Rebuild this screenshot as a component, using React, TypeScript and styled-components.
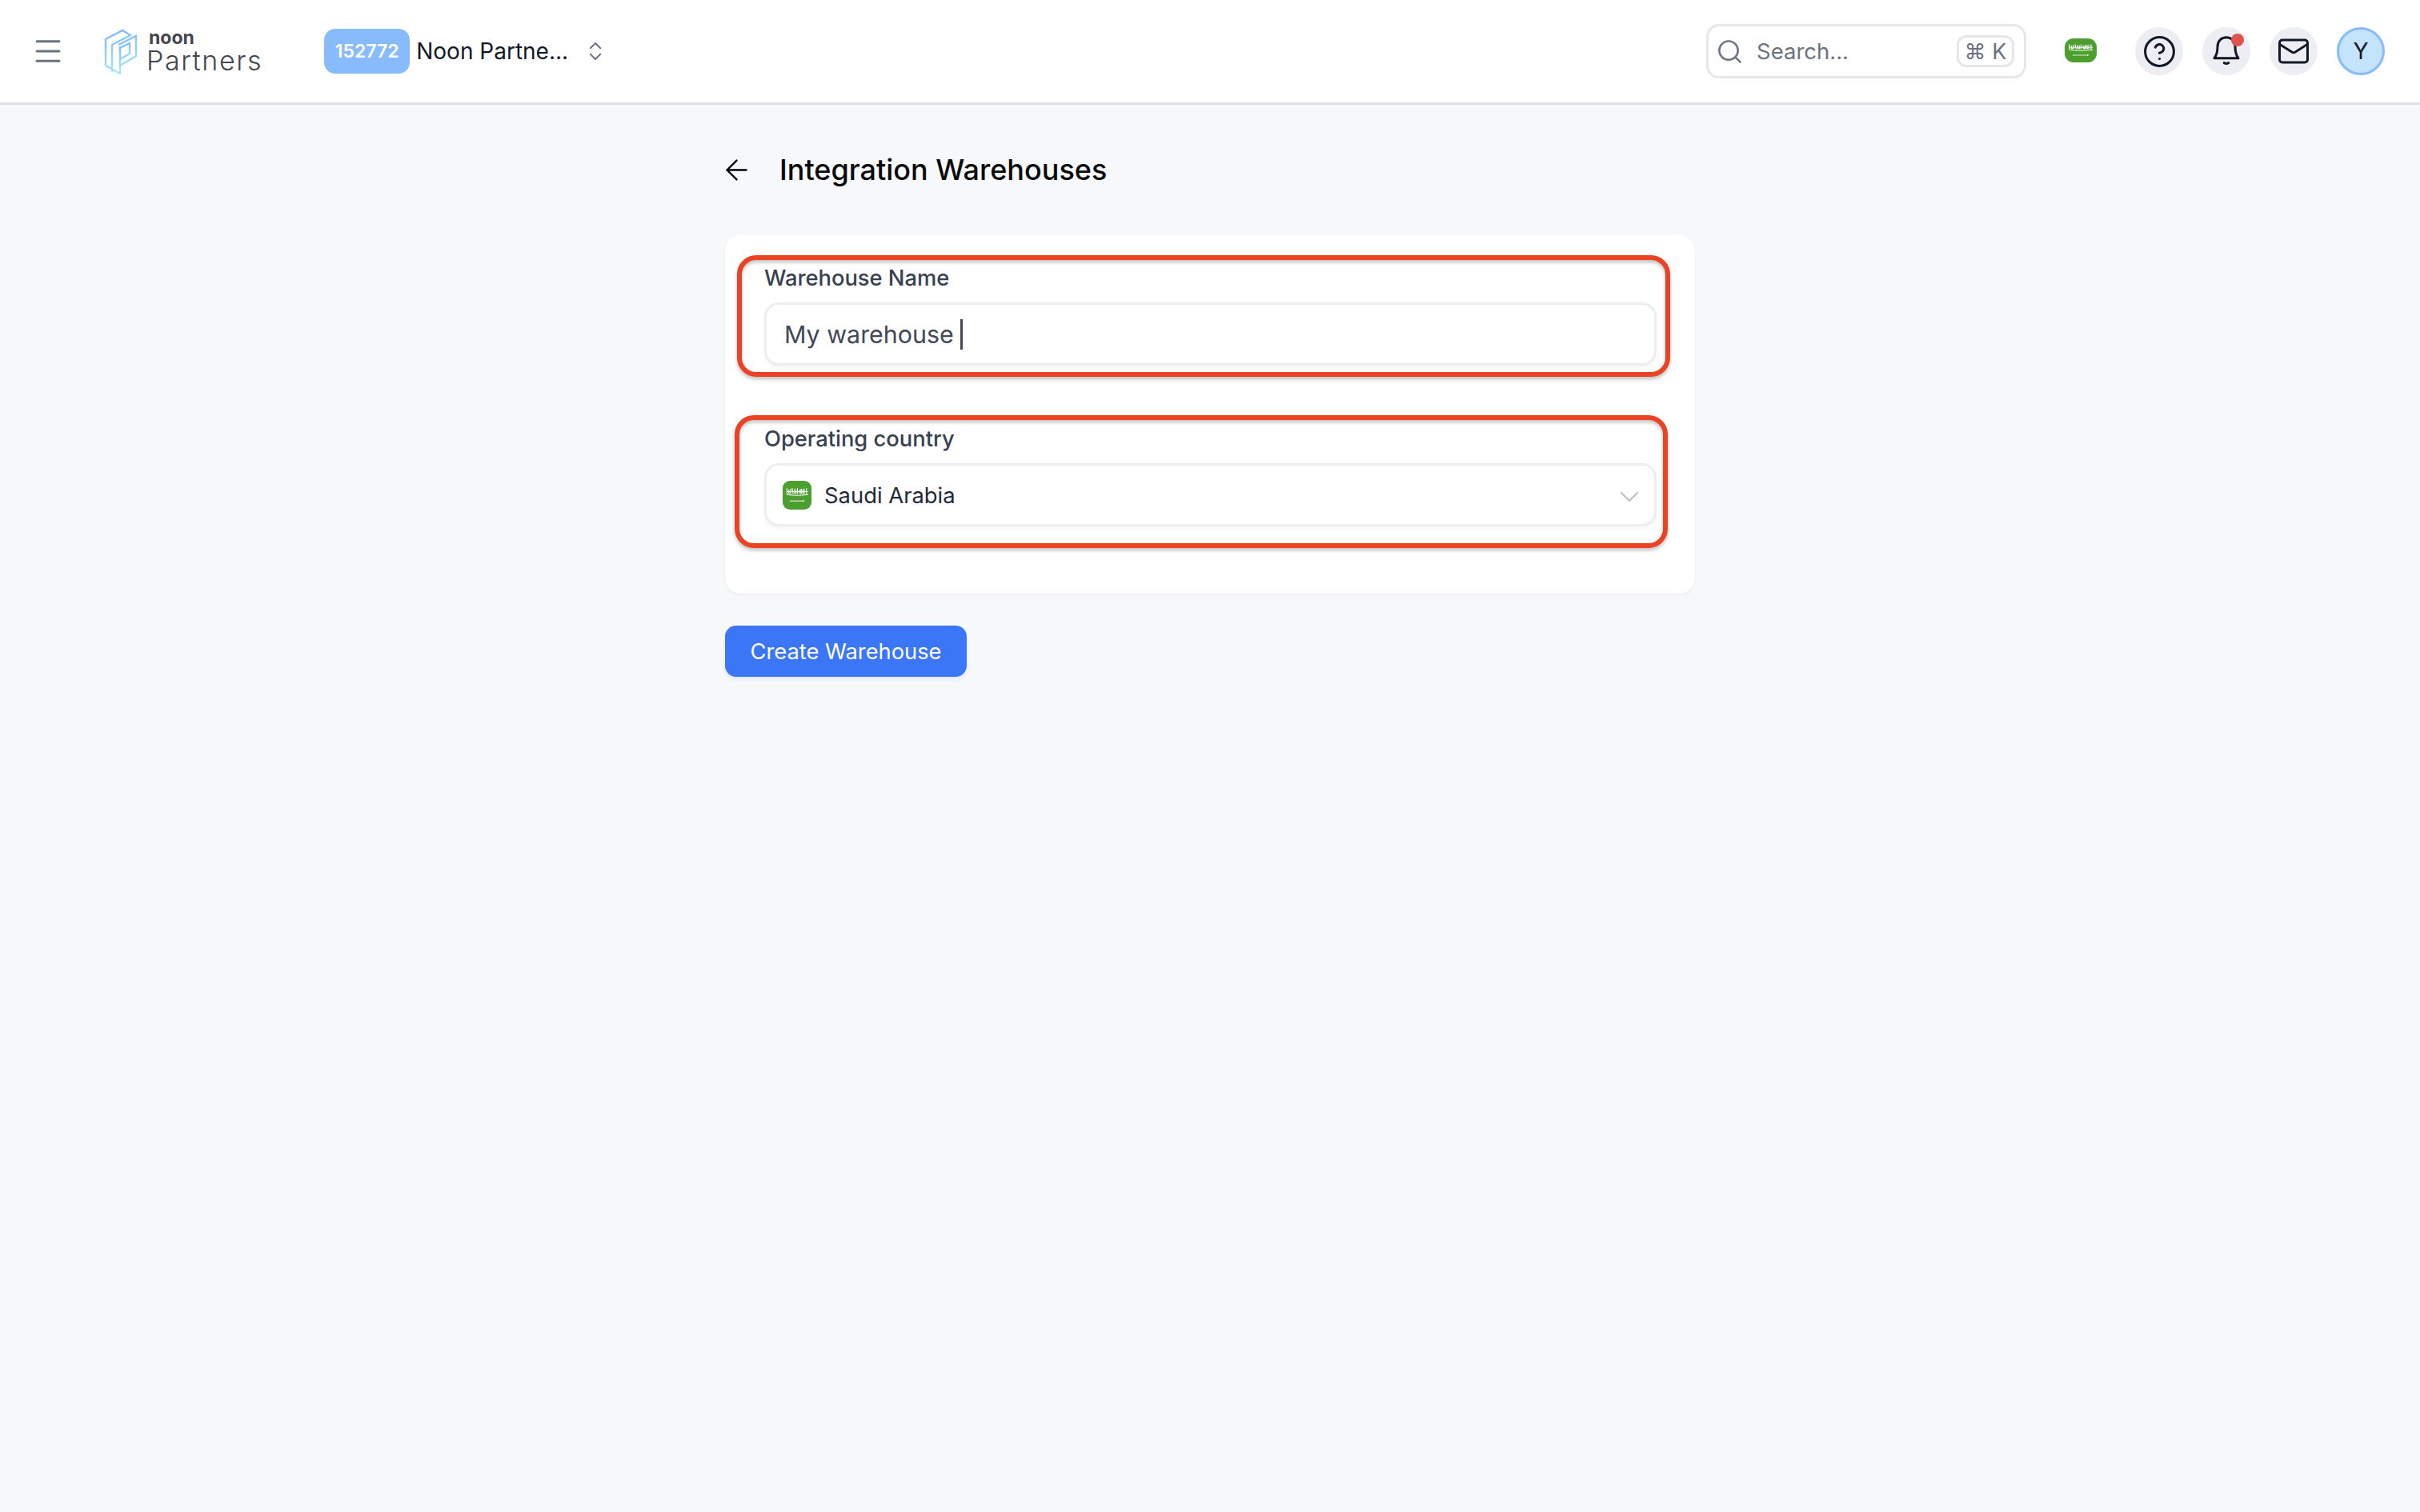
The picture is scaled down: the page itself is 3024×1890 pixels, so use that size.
import styled, { createGlobalStyle } from "styled-components";
import { ChevronDown, ChevronsUpDown, CircleHelp, Mail, Search, ArrowLeft, Menu } from "lucide-react";

const GlobalStyle = createGlobalStyle`
  html, body {
    margin: 0;
    padding: 0;
    background: #f7f8fa;
    font-family: Inter, "Liberation Sans", sans-serif;
  }
  * { box-sizing: border-box; }
`;

const Page = styled.div`
  width: 3024px;
  min-height: 1890px;
  background: #f7f8fa;
`;

const Header = styled.header`
  height: 131px;
  background: #fff;
  border-bottom: 3px solid #dfe0e8;
  display: flex;
  align-items: center;
  justify-content: space-between;
  padding: 0 44px 0 39px;
`;

const Left = styled.div`
  display: flex;
  align-items: center;
`;

const Right = styled.div`
  display: flex;
  align-items: center;
`;

const MenuButton = styled.div`
  width: 42px;
  height: 42px;
  color: #6b7280;
  display: flex;
  margin-right: 49px;
`;

const Logo = styled.div`
  display: flex;
  align-items: center;
  gap: 14px;
  margin-right: 77px;
`;

const LogoText = styled.div`
  display: flex;
  flex-direction: column;
  color: #45464e;
`;

const LogoNoon = styled.span`
  font-size: 23px;
  line-height: 23px;
  font-weight: 700;
`;

const LogoPartners = styled.span`
  font-size: 34px;
  line-height: 34px;
  font-weight: 300;
  letter-spacing: 1.6px;
  margin-left: -3px;
`;

const Badge = styled.div`
  width: 107px;
  height: 56px;
  border-radius: 14px;
  background: #88bbfb;
  color: #fff;
  font-size: 23px;
  font-weight: 600;
  display: flex;
  align-items: center;
  justify-content: center;
  margin-right: 8px;
`;

const AccountName = styled.span`
  font-size: 28px;
  color: #111827;
  margin-right: 19px;
`;

const AccountSwitch = styled.div`
  color: #6b7280;
  display: flex;
`;

const SearchBox = styled.div`
  width: 400px;
  height: 68px;
  border: 3px solid #e5e7eb;
  border-radius: 16px;
  display: flex;
  align-items: center;
  padding: 0 12px 0 9px;
  color: #6b7280;
  margin-right: 48px;
`;

const SearchText = styled.span`
  font-size: 27.5px;
  margin-left: 16px;
  flex: 1;
`;

const Kbd = styled.span`
  width: 72px;
  height: 40px;
  border: 3px solid #e5e7eb;
  border-radius: 12px;
  font-size: 27px;
  display: flex;
  align-items: center;
  justify-content: center;
  white-space: pre;
`;

const FlagBox = styled.div<{ $w: number; $h: number; $r: number }>`
  width: ${(p) => p.$w}px;
  height: ${(p) => p.$h}px;
  border-radius: ${(p) => p.$r}px;
  background: #4c9e2e;
  flex-shrink: 0;
  display: flex;
`;

const HeaderFlag = styled.div`
  margin-right: 48px;
  margin-top: -2px;
`;

const IconCircle = styled.div`
  position: relative;
  width: 60px;
  height: 60px;
  border-radius: 50%;
  background: #edeef3;
  color: #111827;
  display: flex;
  align-items: center;
  justify-content: center;
  margin-right: 24px;
`;

const Dot = styled.span`
  position: absolute;
  top: 8px;
  right: 8px;
  width: 16px;
  height: 16px;
  border-radius: 50%;
  background: #e0524f;
`;

const Avatar = styled.div`
  width: 60px;
  height: 60px;
  border-radius: 50%;
  background: #c4e3fc;
  border: 3px solid #88bbfb;
  color: #111827;
  font-size: 28px;
  display: flex;
  align-items: center;
  justify-content: center;
`;

const Main = styled.main`
  width: 1212px;
  margin: 0 auto;
  padding-top: 59px;
`;

const TitleRow = styled.div`
  height: 44px;
  display: flex;
  align-items: center;
  color: #000;
`;

const BackIcon = styled.div`
  width: 24px;
  height: 28px;
  display: flex;
  align-items: center;
  justify-content: center;
  margin: 0 42px 0 2px;
  svg { flex-shrink: 0; }
`;

const Title = styled.h1`
  margin: 0;
  font-size: 36px;
  font-weight: 500;
  color: #0a0a0a;
`;

const Card = styled.section`
  margin-top: 60px;
  height: 448px;
  background: #fff;
  border-radius: 20px;
  box-shadow: 0 2px 4px rgba(30, 40, 70, 0.05);
  padding: 36px 48px 0 49px;
  display: flex;
  flex-direction: column;
  gap: 74px;
`;

const Field = styled.div`
  position: relative;
`;

const Label = styled.div`
  height: 36px;
  line-height: 36px;
  font-size: 27.3px;
  font-weight: 500;
  color: #374151;
  margin-bottom: 12px;
`;

const InputBox = styled.div`
  height: 79px;
  border: 3px solid #eeeef0;
  border-radius: 18px;
  background: #fff;
  box-shadow: 0 3px 6px rgba(0, 0, 0, 0.04);
  display: flex;
  align-items: center;
`;

const InputValue = styled.span`
  font-size: 30.4px;
  color: #414859;
  margin-left: 22px;
`;

const Caret = styled.span`
  width: 3px;
  height: 38px;
  background: #414859;
  margin-left: 8px;
`;

const SelectValue = styled.span`
  font-size: 27.4px;
  color: #1f2937;
  margin-left: 16px;
  flex: 1;
`;

const SelectFlag = styled.div`
  margin-left: 20px;
`;

const SelectChevron = styled.div`
  color: #bdbdbd;
  display: flex;
  margin: 5px 11px 0 0;
`;

const Highlight = styled.div<{ $top: number; $right: number; $bottom: number; $left: number }>`
  position: absolute;
  top: ${(p) => p.$top}px;
  right: ${(p) => p.$right}px;
  bottom: ${(p) => p.$bottom}px;
  left: ${(p) => p.$left}px;
  border: 6px solid #ea4225;
  border-radius: 24px;
  filter: drop-shadow(0 3px 2px rgba(0, 0, 0, 0.25));
  pointer-events: none;
`;

const CreateButton = styled.button`
  display: block;
  margin-top: 40px;
  width: 302px;
  height: 64px;
  border: 0;
  border-radius: 14px;
  background: #3b76f6;
  box-shadow: 0 3px 5px rgba(59, 118, 246, 0.12);
  color: #fff;
  font-family: inherit;
  font-size: 27.3px;
`;

const LogoMark = () => (
  <svg width="42" height="57" viewBox="0 0 42 57" fill="none">
    <defs>
      <linearGradient id="logoGrad" x1="0" y1="0" x2="0.3" y2="1">
        <stop offset="0" stopColor="#7db2f8" />
        <stop offset="1" stopColor="#a5e6fd" />
      </linearGradient>
    </defs>
    <g stroke="url(#logoGrad)" strokeWidth="2.4" strokeLinejoin="miter">
      <path d="M2 46V13L23 2l10 6L10 20v34" />
      <path d="M2 46l18 10v-10l20-12V9l-22 11" />
      <path d="M20 46V22M20 24l12-6v13l-12 7" />
    </g>
  </svg>
);

const BellIcon = () => (
  <svg width="60" height="60" viewBox="0 0 60 60" fill="none" stroke="currentColor" strokeWidth="3">
    <path d="M15 38.700h30c-3-4-4-8-4-14.200C41 17.500 36.500 12.700 30 12.700S19 17.500 19 24.500c0 6.200-1 10.200-4 14.200z" strokeLinejoin="round" />
    <path d="M27.200 44.500q2.800 2 5.600 0" strokeLinecap="round" />
  </svg>
);

// shahada squiggle and sword, drawn small
const SaudiFlag = ({ w, h, r }: { w: number; h: number; r: number }) => (
  <FlagBox $w={w} $h={h} $r={r}>
    <svg width={w} height={h} viewBox="0 0 40 40" preserveAspectRatio="none" fill="none">
      <path
        d="M6 10v9M8.500 12v5h2.500v-6M13 10l1.500 8M16.500 11v6h2v-5M20.500 10v8M23 12l1 6 2-7v7M28 11v6h2v-6M33 10v9M5 15h30M6 19c8 1.500 20 1.500 29 0"
        stroke="#fff"
        strokeWidth="1.3"
        opacity="0.92"
      />
      <path d="M10 28h19" stroke="#fff" strokeWidth="1.2" opacity="0.9" />
      <path d="M28 26.500l3 1.500-3 1z" fill="#fff" opacity="0.9" />
    </svg>
  </FlagBox>
);

const App = () => {
  return (
    <Page>
      <GlobalStyle />
      <Header>
        <Left>
          <MenuButton>
            <Menu size={42} strokeWidth={1.6} />
          </MenuButton>
          <Logo>
            <LogoMark />
            <LogoText>
              <LogoNoon>noon</LogoNoon>
              <LogoPartners>Partners</LogoPartners>
            </LogoText>
          </Logo>
          <Badge>152772</Badge>
          <AccountName>Noon Partne...</AccountName>
          <AccountSwitch>
            <ChevronsUpDown size={30} strokeWidth={1.6} />
          </AccountSwitch>
        </Left>
        <Right>
          <SearchBox>
            <Search size={35} strokeWidth={1.7} />
            <SearchText>Search...</SearchText>
            <Kbd>⌘ K</Kbd>
          </SearchBox>
          <HeaderFlag>
            <SaudiFlag w={40} h={30} r={11} />
          </HeaderFlag>
          <IconCircle>
            <CircleHelp size={43} strokeWidth={1.7} />
          </IconCircle>
          <IconCircle>
            <BellIcon />
            <Dot />
          </IconCircle>
          <IconCircle>
            <Mail size={42} strokeWidth={1.7} />
          </IconCircle>
          <Avatar>Y</Avatar>
        </Right>
      </Header>
      <Main>
        <TitleRow>
          <BackIcon>
            <ArrowLeft size={41} strokeWidth={1.4} />
          </BackIcon>
          <Title>Integration Warehouses</Title>
        </TitleRow>
        <Card>
          <Field>
            <Label>Warehouse Name</Label>
            <InputBox>
              <InputValue>My warehouse</InputValue>
              <Caret />
            </InputBox>
            <Highlight $top={-11} $right={-17} $bottom={-14} $left={-34} />
          </Field>
          <Field>
            <Label>Operating country</Label>
            <InputBox>
              <SelectFlag>
                <SaudiFlag w={36} h={36} r={9} />
              </SelectFlag>
              <SelectValue>Saudi Arabia</SelectValue>
              <SelectChevron>
                <ChevronDown size={40} strokeWidth={1.2} />
              </SelectChevron>
            </InputBox>
            <Highlight $top={-12} $right={-14} $bottom={-27} $left={-37} />
          </Field>
        </Card>
        <CreateButton>Create Warehouse</CreateButton>
      </Main>
    </Page>
  );
};

export default App;
